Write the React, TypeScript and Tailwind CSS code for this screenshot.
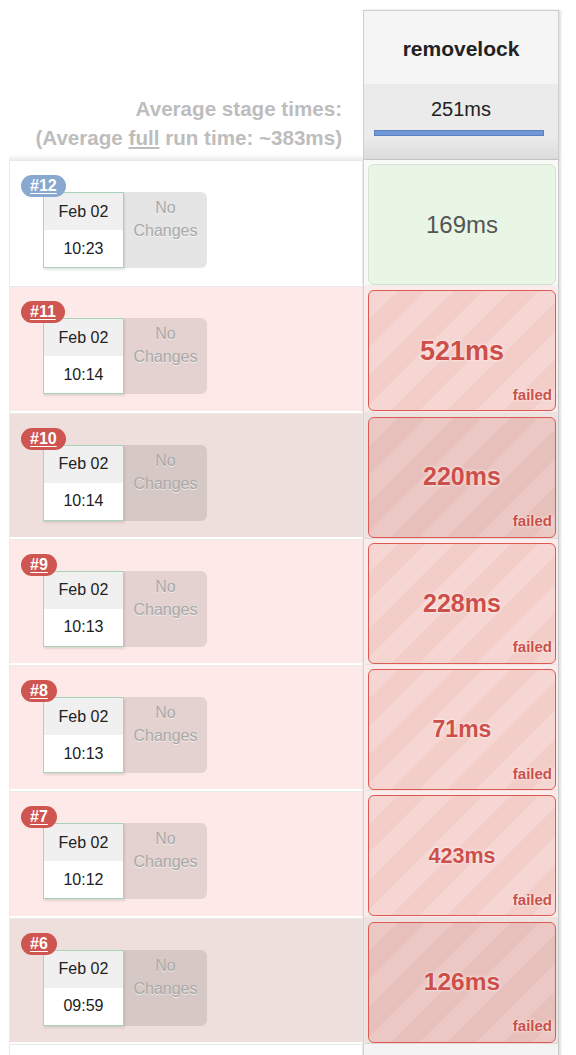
import React from "react";

type Build = {
  n: number;
  time: string;
  failed: boolean;
  dur: string;
  size: string;
  dark: boolean;
};

const builds: Build[] = [
  { n: 12, time: "10:23", failed: false, dur: "169ms", size: "text-[24px]", dark: false },
  { n: 11, time: "10:14", failed: true, dur: "521ms", size: "text-[27px]", dark: false },
  { n: 10, time: "10:14", failed: true, dur: "220ms", size: "text-[25px]", dark: true },
  { n: 9, time: "10:13", failed: true, dur: "228ms", size: "text-[25px]", dark: false },
  { n: 8, time: "10:13", failed: true, dur: "71ms", size: "text-[23px]", dark: false },
  { n: 7, time: "10:12", failed: true, dur: "423ms", size: "text-[21.5px]", dark: false },
  { n: 6, time: "09:59", failed: true, dur: "126ms", size: "text-[24.5px]", dark: true },
];

function Row({ b }: { b: Build }) {
  const rowBg = !b.failed ? "bg-white" : b.dark ? "bg-[#efdfdc]" : "bg-[#fdeae8]";
  const colBg = !b.failed ? "bg-[#f7faf6]" : b.dark ? "bg-[#eee2e0]" : "bg-[#fbeceb]";
  const badgeBg = b.failed ? "bg-[#cf5550]" : "bg-[#89a8cf]";
  const cellBg = b.dark
    ? "bg-[repeating-linear-gradient(135deg,#ebc8c4_0px,#ebc8c4_20px,#e8c0bb_20px,#e8c0bb_40px)]"
    : "bg-[repeating-linear-gradient(135deg,#f6d6d2_0px,#f6d6d2_20px,#f3cdc8_20px,#f3cdc8_40px)]";
  return (
    <div className="flex h-[126.3px]">
      <div className="w-[9px] shrink-0 bg-white" />
      <div className={`relative w-[354px] shrink-0 border border-[#e9e9e9] border-b-white border-b-[2px] ${rowBg}`}>
        <div
          className={`absolute left-[11px] top-[14px] z-10 flex h-[22px] items-center rounded-full px-[9px] text-[16px] font-bold text-white underline underline-offset-2 ${badgeBg}`}
        >
          #{b.n}
        </div>
        <div className="flex pl-[33px] pt-[31px]">
          <div className="h-[76px] w-[81px] border border-[#a9d3b9] bg-white text-center text-[16px] text-[#222] shadow-[1px_2px_2px_rgba(0,0,0,0.1)]">
            <div className="flex h-[37px] items-center justify-center bg-[#f0f0f0]">Feb 02</div>
            <div className="flex h-[37px] items-center justify-center">{b.time}</div>
          </div>
          <div className="h-[76px] w-[83px] rounded-r-[6px] bg-black/10 pt-[4px] text-center text-[16px] leading-[23px] text-[#a9a9a9] [text-shadow:0_1px_0_rgba(255,255,255,0.6)]">
            <div>No</div>
            <div>Changes</div>
          </div>
        </div>
      </div>
      <div
        className={`w-[196px] shrink-0 border-x border-l-[#d4d4d4] border-r-[#c9c9c9] pl-[4px] pr-[2px] pt-[4px] shadow-[2px_0_2px_rgba(0,0,0,0.12)] ${colBg}`}
      >
        {b.failed ? (
          <div
            className={`relative flex h-[121px] items-center justify-center rounded-[6px] border border-[#dc5a53] ${cellBg}`}
          >
            <span className={`font-bold text-[#cd4f4a] [text-shadow:0_0_3px_#fff] ${b.size}`}>{b.dur}</span>
            <span className="absolute bottom-[4px] right-[3px] text-[15px] font-bold text-[#cd4f4a] [text-shadow:0_0_3px_#fff]">
              failed
            </span>
          </div>
        ) : (
          <div className="flex h-[121px] items-center justify-center rounded-[6px] border border-[#d6e2d2] bg-[#eaf6e5]">
            <span className={`text-[#555] ${b.size}`}>{b.dur}</span>
          </div>
        )}
      </div>
    </div>
  );
}

export default function App() {
  return (
    <div className="h-[1055px] w-[576px] overflow-hidden bg-white font-['Liberation_Sans',Arial,sans-serif]">
      <div className="flex pt-[10px]">
        <div className="flex h-[150px] w-[363px] shrink-0 flex-col">
          <div className="flex flex-1 flex-col items-end justify-end pb-[2px] pr-[21px] text-right text-[20.6px] font-bold leading-[29px] text-[#bdbdbd]">
            <div>Average stage times:</div>
            <div>
              (Average <span className="underline underline-offset-2">full</span> run time: ~383ms)
            </div>
          </div>
          <div className="ml-[9px] h-[6px] bg-gradient-to-b from-white to-[#ececec]" />
        </div>
        <div className="w-[196px] shrink-0 border border-[#cdcdcd] shadow-[2px_0_2px_rgba(0,0,0,0.12)]">
          <div className="flex h-[73px] items-center justify-center bg-[#f5f5f5] pt-[2px] text-[21px] font-bold text-[#222]">
            removelock
          </div>
          <div className="flex h-[75px] flex-col items-center bg-gradient-to-b from-[#ebebeb] from-70% to-[#dcdcdc] pt-[13px]">
            <div className="text-[20px] leading-[24px] text-[#222]">251ms</div>
            <div className="mt-[9px] h-[6px] w-[170px] -translate-x-[2px] border border-[#5b80c4] bg-[#7097d6]" />
          </div>
        </div>
      </div>
      {builds.map((b) => (
        <Row key={b.n} b={b} />
      ))}
      <div className="flex h-[40px]">
        <div className="w-[9px] shrink-0 bg-white" />
        <div className="w-[354px] shrink-0 border border-[#e9e9e9] bg-white" />
        <div className="w-[196px] shrink-0 border-x border-l-[#d4d4d4] border-r-[#c9c9c9] bg-[#f4f4f4] shadow-[2px_0_2px_rgba(0,0,0,0.12)]" />
      </div>
    </div>
  );
}
